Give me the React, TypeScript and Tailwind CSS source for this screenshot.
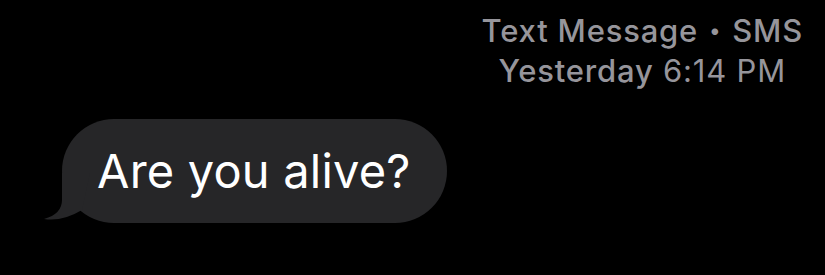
export default function App() {
  return (
    <div
      className="w-[825px] h-[275px] bg-black overflow-hidden"
      style={{ fontFamily: "Inter, 'Noto Sans', sans-serif" }}
    >
      {/* Header */}
      <div className="flex justify-end pr-[22px] pt-[11px]">
        <div className="flex flex-col items-center text-[#96959b] text-[31px] leading-[40px] tracking-[0.8px]">
          <span className="font-medium">
            Text Message <span className="inline-block align-[4px] text-[21px] leading-none px-[2px]">•</span> SMS
          </span>
          <span>
            <span className="font-medium">Yesterday</span> 6:14 PM
          </span>
        </div>
      </div>

      {/* Bubble */}
      <div className="pl-[62px] pt-[28px]">
        <div className="relative inline-flex h-[104px] items-center rounded-[52px] bg-[#262628] pl-[35px] pr-[36px]">
          <svg
            className="absolute left-[-20px] bottom-0"
            width="50"
            height="60"
            viewBox="0 0 50 60"
          >
            <path d="M20 10 L20 37 Q20 51 2 56 Q20 59 40 47 L48 10 Z" fill="#262628" />
          </svg>
          <span className="relative text-white text-[47px] tracking-[0.2px] leading-none pb-[2px]">
            Are you alive?
          </span>
        </div>
      </div>
    </div>
  )
}
